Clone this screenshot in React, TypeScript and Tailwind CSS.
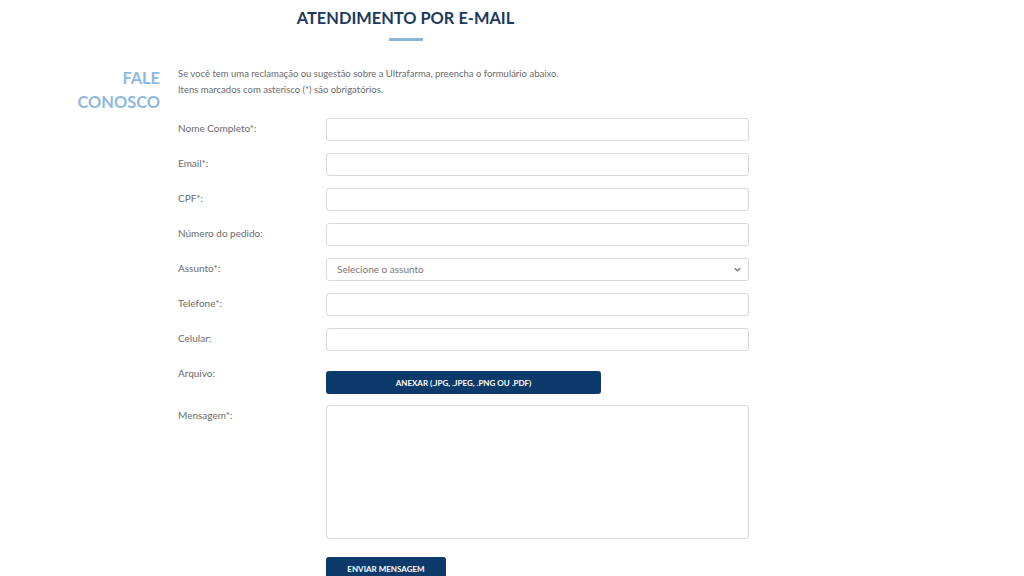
import React from "react";

const font = { fontFamily: "Lato, 'Noto Sans', sans-serif" };

function Row({ label, children, className = "" }: { label: string; children: React.ReactNode; className?: string }) {
  return (
    <div className={"flex items-start " + className}>
      <div className="w-[148px] shrink-0 pt-[4px] text-[10px] leading-[13px] text-[#6b6b6b]">{label}</div>
      {children}
    </div>
  );
}

function Input() {
  return <div className="h-[23px] w-[423px] rounded-[3px] border border-[#d9d9d9] bg-white" />;
}

export default function App() {
  return (
    <div style={font} className="min-h-[576px] w-[1024px] bg-white">
      <div className="w-[811px] pt-[7px]">
        <h1 className="text-center text-[16.4px] font-bold leading-[22px] text-[#1c3a5e]">ATENDIMENTO POR E-MAIL</h1>
        <div className="mx-auto mt-[9px] h-[3px] w-[34px] bg-[#8ab6dc]" />
        <div className="mt-[25px] flex">
          <div className="w-[160px] shrink-0 text-right text-[16.4px] font-bold leading-[24px] text-[#8db9de]">
            <div>FALE</div>
            <div>CONOSCO</div>
          </div>
          <div className="ml-[18px] flex flex-col">
            <p className="text-[9.5px] leading-[16px] text-[#6b6b6b]">
              Se você tem uma reclamação ou sugestão sobre a Ultrafarma, preencha o formulário abaixo.
              <br />
              Itens marcados com asterisco (*) são obrigatórios.
            </p>
            <div className="mt-[20px] flex flex-col gap-[12px]">
              <Row label="Nome Completo*:"><Input /></Row>
              <Row label="Email*:"><Input /></Row>
              <Row label="CPF*:"><Input /></Row>
              <Row label="Número do pedido:"><Input /></Row>
              <Row label="Assunto*:">
                <div className="flex h-[23px] w-[423px] items-center justify-between rounded-[3px] border border-[#d9d9d9] bg-white pl-[10px] pr-[6px]">
                  <span className="text-[10px] text-[#777]">Selecione o assunto</span>
                  <svg width="9" height="9" viewBox="0 0 10 10" fill="none" stroke="#777" strokeWidth="1.6">
                    <path d="M2 3.5 L5 6.5 L8 3.5" />
                  </svg>
                </div>
              </Row>
              <Row label="Telefone*:"><Input /></Row>
              <Row label="Celular:"><Input /></Row>
            </div>
            <div className="mt-[16px] flex items-start">
              <div className="w-[148px] shrink-0 text-[10px] leading-[13px] text-[#6b6b6b]">Arquivo:</div>
              <div className="mt-[4px] flex h-[23px] w-[275px] items-center justify-center rounded-[3px] bg-[#0c3a6a] text-[8px] font-bold text-white">
                ANEXAR (.JPG, .JPEG, .PNG OU .PDF)
              </div>
            </div>
            <Row label="Mensagem*:" className="mt-[11px]">
              <div className="h-[134px] w-[423px] rounded-[3px] border border-[#d9d9d9] bg-white" />
            </Row>
            <div className="mt-[18px] flex">
              <div className="ml-[148px] flex h-[24px] w-[120px] items-center justify-center rounded-[3px] bg-[#0c3a6a] text-[8px] font-bold text-white">
                ENVIAR MENSAGEM
              </div>
            </div>
          </div>
        </div>
      </div>
    </div>
  );
}
